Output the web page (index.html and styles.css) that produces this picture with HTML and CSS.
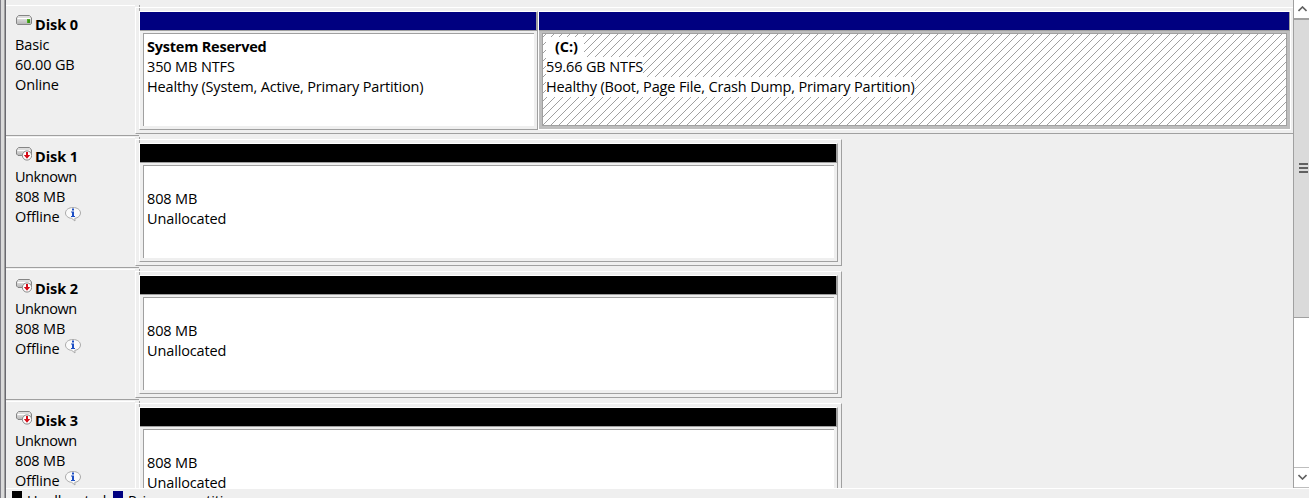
FILE: index.html
```html
<!DOCTYPE html>
<html lang="en">
<head>
<meta charset="utf-8">
<title>Disk Management</title>
<link rel="stylesheet" href="styles.css">
</head>
<body>
<svg class="defs" width="0" height="0" aria-hidden="true">
  <defs>
    <linearGradient id="metal" x1="0" y1="0" x2="0" y2="1"><stop offset="0" stop-color="#f4f4f4"/><stop offset="1" stop-color="#b4b4b4"/></linearGradient>
    <symbol id="drive" viewBox="0 0 16 10">
      <path d="M2.5 .5H13.5L15.5 3V8.5L14.5 9.5H1.5L.5 8.5V3Z" fill="url(#metal)" stroke="#858585"/>
      <path d="M3 1H13L14.5 3H1.5Z" fill="#dedede"/><path d="M1.5 3.5H14.5" stroke="#fff"/>
      <path d="M11 4H14V8H11Z" fill="#4fae24"/><path d="M13 5V8" stroke="#247808"/>
    </symbol>
    <symbol id="drive-off" viewBox="0 0 16 15">
      <path d="M2.5 1.5H13.5L15.5 4V8L14 9.5H2L.5 8V4Z" fill="url(#metal)" stroke="#858585"/>
      <path d="M3 2H13L14 4H2Z" fill="#ddd"/><path d="M1.5 4.5H14" stroke="#fff"/>
      <circle cx="11" cy="9.5" r="4.6" fill="#fff" stroke="#888"/>
      <path d="M10 6H12V9H14.2L11 12.8L7.8 9H10Z" fill="#d40c18"/>
    </symbol>
    <symbol id="info" viewBox="0 0 16 15">
      <path d="M8 .5C12.3.5 15.5 2.9 15.5 6C15.5 8.8 13 11 9.8 11.4L10 14L6.7 11.4C3 11 .5 8.8 .5 6C.5 2.9 3.7.5 8 .5Z" fill="#fafafa" stroke="#aaa"/>
      <path d="M7 1.5H9V3.5H7ZM6 4.5H9V9H10V10H6V9H7V5.5H6Z" fill="#1d4fc4"/>
    </symbol>
  </defs>
</svg>
<div class="window">
  <div class="frame"></div>
  <main class="content">
    <div class="disks">
      <section class="row">
        <div class="label">
          <div class="title"><svg class="drive"><use href="#drive"/></svg><b>Disk 0</b></div>
          <div>Basic</div><div>60.00 GB</div><div>Online</div>
        </div>
        <div class="gutter"></div>
        <div class="graph wide">
          <div class="part reserved"><div class="bar navy"></div><div class="body"><div class="box"><b class="sysname">System Reserved</b><div>350 MB NTFS</div><div class="long">Healthy (System, Active, Primary Partition)</div></div></div></div>
          <div class="part system"><div class="bar navy"></div><div class="body selected"><div class="box hatch">
            <svg class="lines"><defs><pattern id="hatch" x="3" width="8" height="8" patternUnits="userSpaceOnUse"><path d="M0 7h1v1H0zM1 6h1v1H1zM2 5h1v1H2zM3 4h1v1H3zM4 3h1v1H4zM5 2h1v1H5zM6 1h1v1H6zM7 0h1v1H7z" fill="#a0a0a0" shape-rendering="crispEdges"/></pattern></defs><rect width="100%" height="100%" fill="url(#hatch)"/></svg>
            <div class="text"><b class="drivename">(C:)</b><div>59.66 GB NTFS</div><div class="long">Healthy (Boot, Page File, Crash Dump, Primary Partition)</div></div></div></div></div>
        </div>
      </section>
      <section class="row">
        <div class="label">
          <div class="title off"><svg class="drive"><use href="#drive-off"/></svg><b>Disk 1</b></div>
          <div class="type">Unknown</div><div>808 MB</div><div class="status"><span>Offline</span><svg class="info"><use href="#info"/></svg></div>
        </div>
        <div class="gutter"></div>
        <div class="graph"><div class="part"><div class="bar black"></div><div class="body"><div class="box empty"><div>808 MB</div><div>Unallocated</div></div></div></div></div>
      </section>
      <section class="row">
        <div class="label">
          <div class="title off"><svg class="drive"><use href="#drive-off"/></svg><b>Disk 2</b></div>
          <div class="type">Unknown</div><div>808 MB</div><div class="status"><span>Offline</span><svg class="info"><use href="#info"/></svg></div>
        </div>
        <div class="gutter"></div>
        <div class="graph"><div class="part"><div class="bar black"></div><div class="body"><div class="box empty"><div>808 MB</div><div>Unallocated</div></div></div></div></div>
      </section>
      <section class="row">
        <div class="label">
          <div class="title off"><svg class="drive"><use href="#drive-off"/></svg><b>Disk 3</b></div>
          <div class="type">Unknown</div><div>808 MB</div><div class="status"><span>Offline</span><svg class="info"><use href="#info"/></svg></div>
        </div>
        <div class="gutter"></div>
        <div class="graph"><div class="part"><div class="bar black"></div><div class="body"><div class="box empty"><div>808 MB</div><div>Unallocated</div></div></div></div></div>
      </section>
    </div>
    <div class="scroll">
      <div class="up"><svg width="9" height="6"><path d="M.5 5L4.5 1L8.5 5" fill="none" stroke="#606060" stroke-width="1.6"/></svg></div>
      <div class="thumb"><i></i><i></i><i></i></div>
      <div class="track"></div>
      <div class="down"><svg width="9" height="6"><path d="M.5 1L4.5 5L8.5 1" fill="none" stroke="#606060" stroke-width="1.6"/></svg></div>
    </div>
    <footer class="legend"><i class="swatch black"></i><span class="un">Unallocated</span><i class="swatch navy"></i><span>Primary partition</span></footer>
  </main>
</div>
</body>
</html>
```
FILE: styles.css
```css
* { box-sizing: border-box; }
body { margin: 0; width: 1309px; height: 498px; overflow: hidden; background: #efefef; color: #000; font: 14.5px/20px "Open Sans", "Noto Sans", sans-serif; letter-spacing: -.13px; }
.defs { position: absolute; }
.window { display: flex; height: 498px; }
.frame { width: 6px; flex: none; background: linear-gradient(90deg, #808088 0 1px, #dadada 1px 4px, #a0a0a0 4px 5px, #696970 5px 6px); }
.content { display: grid; grid-template: 488px 10px / 1287px 16px; }
.disks { padding-top: 5px; overflow: hidden; }
.row { display: flex; height: 132px; }
.label { width: 129px; height: 131px; padding: 9px 0 0 9px; border-top: 1px solid #fff; border-bottom: 1px solid #a0a0a0; white-space: nowrap; }
.title, .status { display: flex; height: 20px; }
.title b { margin-left: 3px; letter-spacing: -.05px; }
.type { letter-spacing: -.45px; }
.drive { width: 16px; height: 10px; margin: 0 0 0 1px; }
.off .drive { height: 15px; margin-top: -1px; }
.status span { width: 45px; }
.info { width: 16px; height: 15px; margin: 0 0 0 5px; }
.gutter { position: relative; width: 4px; height: 127px; margin-top: 2px; border: 1px solid #fff; border-right: 0; border-bottom-color: #a0a0a0; }
.gutter::before { content: ""; position: absolute; left: 3px; top: -3px; width: 1px; height: 6px; background: linear-gradient(#a0a0a0 0 2px, #fff 2px 3px, #a0a0a0 3px); }
.gutter::after { content: ""; position: absolute; left: -1px; top: 127px; width: 4px; height: 1px; background: #a0a0a0; }
.graph { display: flex; width: 703px; height: 127px; margin-top: 2px; padding-top: 3px; border-top: 1px solid #fff; border-right: 1px solid #a0a0a0; border-bottom: 1px solid #a0a0a0; }
.graph.wide { width: 1154px; border-right: 0; }
.part { width: 699px; height: 119px; border-left: 1px solid #fff; border-top: 1px solid #fff; border-right: 1px solid #a0a0a0; border-bottom: 1px solid #a0a0a0; }
.bar { height: 18px; border-right: 1px solid #a0a0a0; }
.navy { background: #000080; }
.black { background: #000; }
.body { height: 99px; padding: 2px 3px 3px; border-top: 1px solid #a0a0a0; }
.box { height: 93px; padding: 3px 0 0 3px; background: #fff; border-left: 1px solid #a0a0a0; border-top: 1px solid #a0a0a0; white-space: nowrap; }
.box b { display: block; }
.sysname { letter-spacing: -.22px; }
.empty { padding-top: 23px; }
.reserved { width: 399px; }
.system { width: 753px; border-right-color: #fff; border-bottom-color: #fff; }
.selected { background: #bebebe; }
.hatch { position: relative; border: 1px solid #a0a0a0; padding: 0; }
.lines { position: absolute; width: 100%; height: 100%; }
.text { position: relative; display: flex; flex-direction: column; align-items: flex-start; padding: 3px 0 0 3px; }
.text > * { background: #fff; }
.drivename { padding: 0 6px 0 9px; }
.long { letter-spacing: -.155px; }
.scroll { display: grid; grid-template-rows: 19px 299px 149px 21px; border-left: 1px solid #a0a0a0; background: #fff; overflow: hidden; }
.up { padding: 6px 0 0 4px; border-bottom: 1px solid #a0a0a0; }
.thumb { display: flex; flex-direction: column; gap: 2px; padding: 143px 0 0 5px; background: #dadada; border-top: 1px solid #a0a0a0; border-bottom: 1px solid #a0a0a0; }
.thumb i { width: 9px; height: 2px; background: #606060; }
.down { padding: 6px 0 0 4px; border-top: 1px solid #bebebe; border-bottom: 1px solid #bebebe; }
.up svg, .down svg { display: block; }
.legend { grid-column: 1 / -1; display: flex; height: 10px; overflow: hidden; border-top: 1px solid #fff; padding-left: 6px; white-space: nowrap; }
.swatch { width: 10px; height: 10px; margin-top: 2px; }
.legend span { margin: 2px 0 0 5px; }
.legend .un { width: 86px; }
```
